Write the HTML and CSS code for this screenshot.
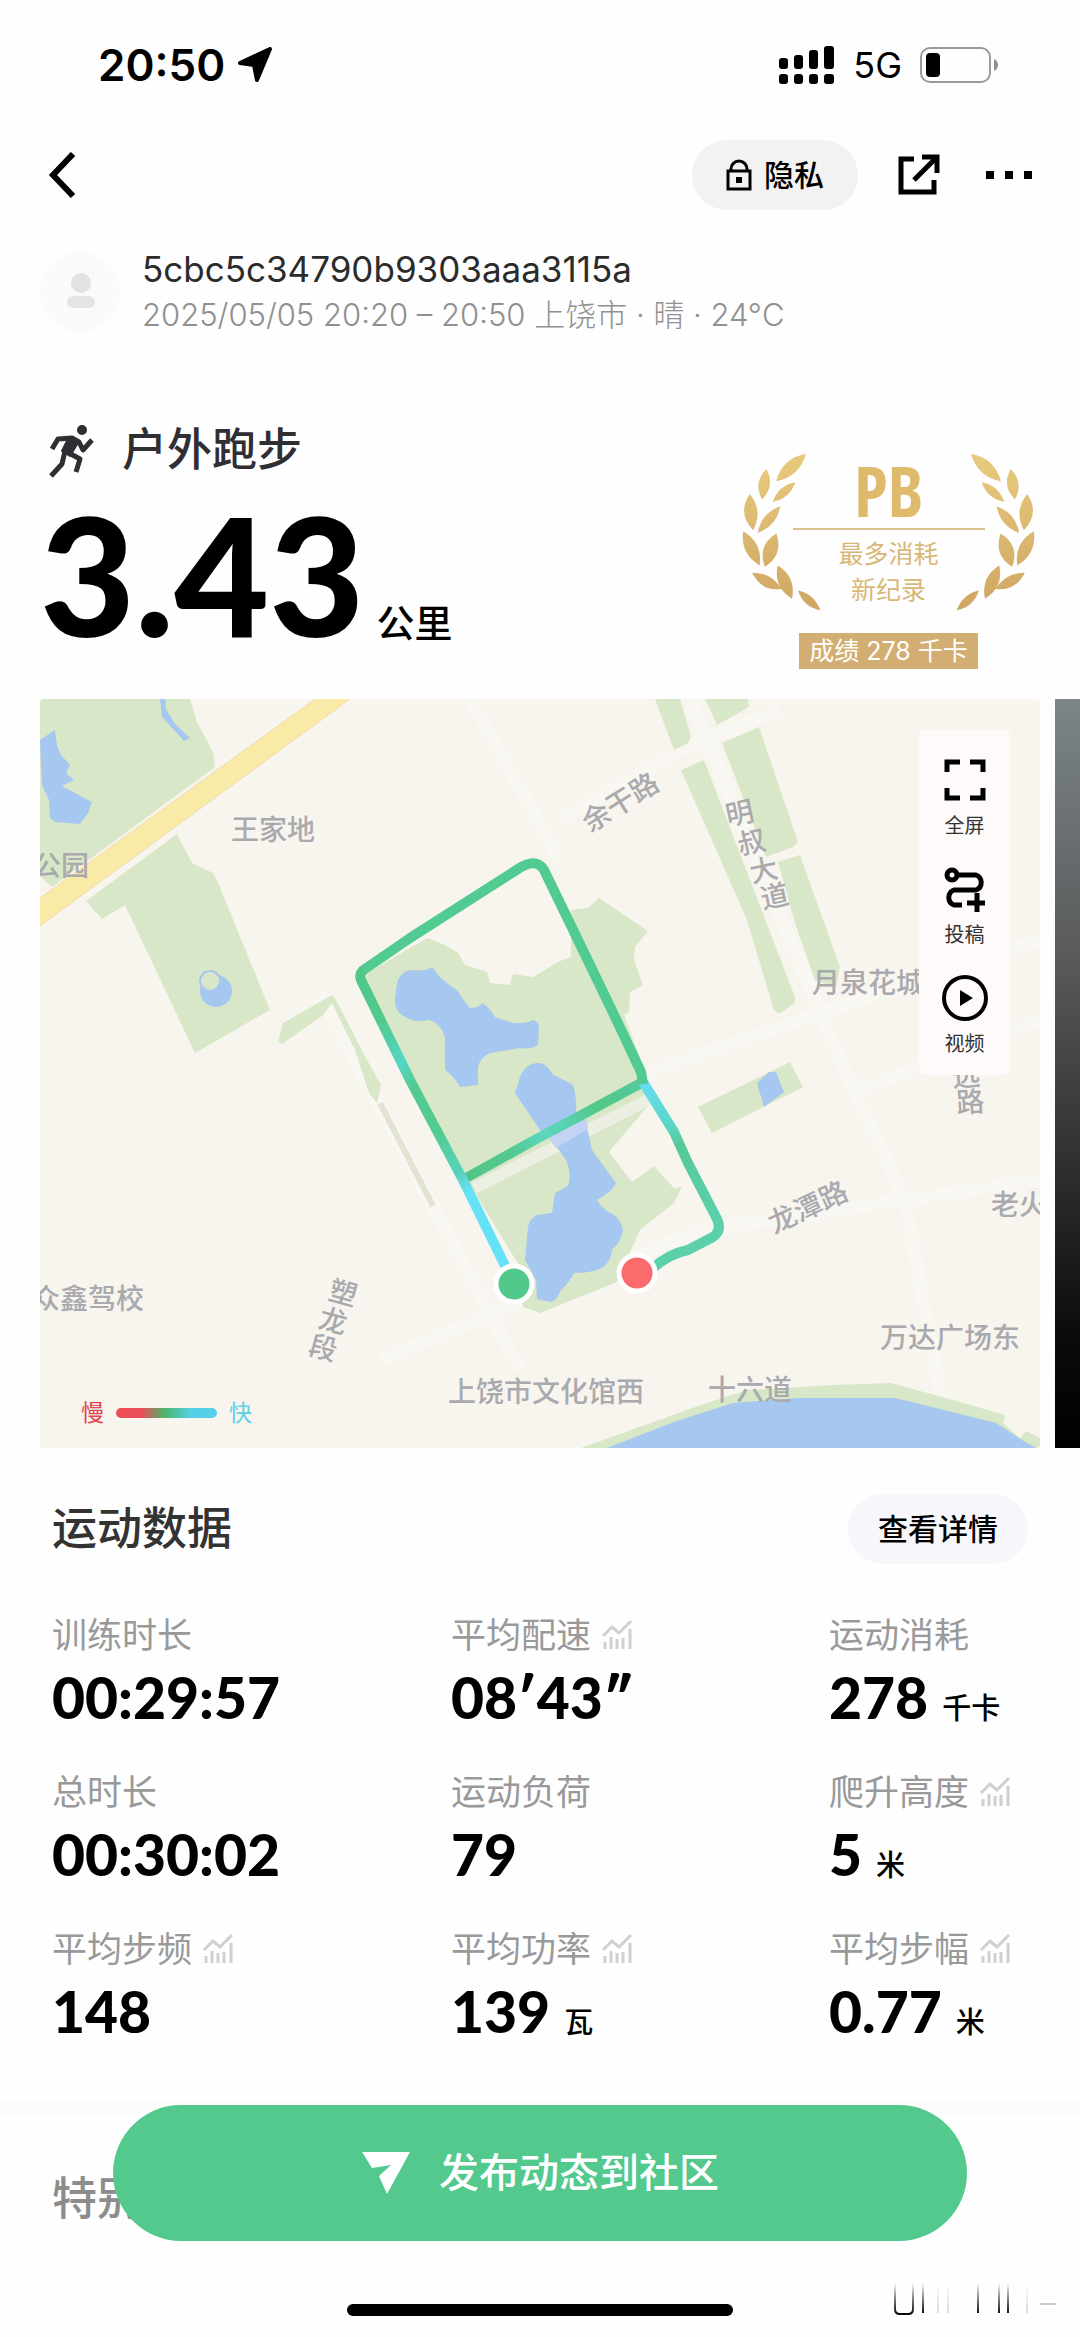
FILE: index.html
```html
<!DOCTYPE html>
<html lang="zh-CN">
<head>
<meta charset="utf-8">
<meta name="viewport" content="width=device-width, initial-scale=1">
<title>户外跑步</title>
<link rel="stylesheet" href="styles.css">
</head>
<body>
<svg class="defs" aria-hidden="true">
  <symbol id="trend" viewBox="0 0 32 32">
    <path d="M2 17 L11 8 L18 14 L30 2" fill="none" stroke="currentColor" stroke-width="3"/>
    <path d="M4 23V30M10 18V30M16 20V30M22 19V30M29 10V30" fill="none" stroke="currentColor" stroke-width="3"/>
  </symbol>
</svg>

<header class="status">
  <div class="status-left">
    <span class="clock">20:50</span>
    <svg width="36" height="36" viewBox="0 0 36 36"><path d="M33 2 L20 33 L17 18 L3 16 Z" stroke="#000" stroke-width="4" stroke-linejoin="round"/></svg>
  </div>
  <div class="status-right">
    <svg width="56" height="40" viewBox="0 0 56 40">
      <rect x="0" y="13" width="9" height="11" rx="3"/><rect x="15" y="10" width="9" height="14" rx="3"/><rect x="30" y="5" width="9" height="19" rx="3"/><rect x="45" y="1" width="10" height="23" rx="3"/>
      <rect x="0" y="29" width="9" height="10" rx="3"/><rect x="15" y="29" width="9" height="10" rx="3"/><rect x="30" y="29" width="9" height="10" rx="3"/><rect x="45" y="29" width="10" height="10" rx="3"/>
    </svg>
    <span class="network">5G</span>
    <svg width="80" height="38" viewBox="0 0 80 38">
      <rect x="1" y="2" width="69" height="34" rx="9" fill="none" stroke="#9a9a9a" stroke-width="2"/>
      <rect x="6" y="7" width="14" height="24" rx="4"/>
      <path d="M74 13 Q78 15 78 19 Q78 23 74 25Z" fill="#8f8f8f"/>
    </svg>
  </div>
</header>

<nav class="nav">
  <button class="icon-button" type="button" aria-label="返回"><svg width="28" height="46" viewBox="0 0 28 46"><path d="M25 2 L5 23 L25 44" fill="none" stroke="#000" stroke-width="6"/></svg></button>
  <div class="nav-actions">
    <button class="pill pill-privacy" type="button">
      <svg width="26" height="32" viewBox="0 0 26 32"><path d="M2 12H24V30H2Z M5 12V10A8 8 0 0 1 21 10V12" fill="none" stroke="#000" stroke-width="3"/><rect x="10" y="18" width="6" height="6"/></svg>
      <span>隐私</span>
    </button>
    <button class="icon-button share" type="button" aria-label="分享"><svg width="42" height="42" viewBox="0 0 42 42"><path d="M16 5H3V38H36V26M24 3H39V19M38 4L16 26" fill="none" stroke="#000" stroke-width="5"/></svg></button>
    <button class="icon-button" type="button" aria-label="更多"><svg width="46" height="8" viewBox="0 0 46 8"><path d="M0 0h8v8h-8zM19 0h8v8h-8zM38 0h8v8h-8z"/></svg></button>
  </div>
</nav>

<main>
  <section class="user">
    <svg class="avatar" width="80" height="80" viewBox="0 0 80 80"><circle cx="40" cy="40" r="40" fill="#fafafa"/><circle cx="41" cy="31" r="10" fill="#e2e2e2"/><rect x="27" y="44" width="28" height="12" rx="6" fill="#e5e5e5"/></svg>
    <div class="user-text">
      <h1 class="user-name">5cbc5c34790b9303aaa3115a</h1>
      <p class="user-meta">2025/05/05 20:20 – 20:50 上饶市 · 晴 · 24°C</p>
    </div>
  </section>

  <section class="summary">
    <div>
      <h2 class="sport">
        <svg width="48" height="56" viewBox="48 420 48 56"><circle cx="82" cy="428" r="5" fill="#2f2f33"/><g fill="none" stroke="#2f2f33" stroke-width="5" stroke-linejoin="round"><path d="M52 447L58 437L72 436L79 440L83 448L92 438"/><path d="M68 437L79 439L70 454L62 449Z" fill="#2f2f33" stroke-width="2"/><path d="M69 451L80 457L76 470"/><path d="M65 449L62 462L51 474"/></g></svg>
        <span>户外跑步</span>
      </h2>
      <p class="distance"><span class="distance-value">3.43</span><span class="distance-unit">公里</span></p>
    </div>
    <div class="record">
      <svg class="laurel" width="293" height="158" viewBox="65 70 880 475" aria-hidden="true">
        <defs>
          <linearGradient id="gold" gradientUnits="userSpaceOnUse" x1="0" y1="70" x2="0" y2="545"><stop offset="0" stop-color="#e8cb7e"/><stop offset="1" stop-color="#cfa562"/></linearGradient>
          <g id="branch"><path d="M257 72Q238 141 167 155Q186 85 257 72M138 118Q165 169 125 210Q97 159 138 118M225 158Q208 207 157 217Q174 167 225 158M88 193Q129 244 98 302Q49 250 88 193M180 230Q169 290 112 310Q123 250 180 230M68 305Q127 339 118 408Q59 373 68 305M168 312Q190 376 133 412Q110 348 168 312M95 430Q152 429 183 478Q126 489 95 430M172 408Q228 443 215 508Q158 473 172 408M233 483Q283 494 300 543Q249 532 233 483"/></g>
        </defs>
        <g fill="url(#gold)"><use href="#branch"/><use href="#branch" transform="translate(1010 0) scale(-1 1)"/></g>
      </svg>
      <strong class="record-mark">PB</strong>
      <p class="record-name">最多消耗<br>新纪录</p>
      <p class="record-score">成绩 278 千卡</p>
    </div>
  </section>

  <section class="carousel">
    <div class="map">
      <svg class="map-canvas" viewBox="40 699 1000 749" preserveAspectRatio="xMidYMid slice">
        <defs>
          <linearGradient id="west" gradientUnits="userSpaceOnUse" x1="361" y1="975" x2="514" y2="1284"><stop offset="0" stop-color="#4fc88a"/><stop offset=".15" stop-color="#52ca8f"/><stop offset=".28" stop-color="#55d6c4"/><stop offset=".36" stop-color="#52cb90"/><stop offset=".5" stop-color="#52cb90"/><stop offset=".64" stop-color="#58d2bb"/><stop offset=".7" stop-color="#66e2f6"/><stop offset="1" stop-color="#66e2f6"/></linearGradient>
          <linearGradient id="cross" gradientUnits="userSpaceOnUse" x1="466" y1="1178" x2="643" y2="1083"><stop offset="0" stop-color="#4fc585"/><stop offset=".25" stop-color="#54c98f"/><stop offset=".45" stop-color="#5cd6bd"/><stop offset=".6" stop-color="#57d0a8"/><stop offset=".75" stop-color="#52c788"/><stop offset="1" stop-color="#56c99c"/></linearGradient>
          <linearGradient id="east" gradientUnits="userSpaceOnUse" x1="643" y1="1083" x2="719" y2="1223"><stop offset="0" stop-color="#66dcf0"/><stop offset=".32" stop-color="#5cd6c4"/><stop offset=".45" stop-color="#56c99a"/><stop offset="1" stop-color="#5bd0ab"/></linearGradient>
        </defs>
        <rect x="40" y="699" width="1000" height="749" fill="#f8f5ef"/>
        <g fill="none" stroke="#f9f7f2" stroke-width="13">
          <path d="M690 699L840 1060L905 1200L950 1448"/><path d="M560 820L680 750L780 710"/><path d="M380 1360L700 1230L1040 1180"/><path d="M640 1075L860 1000L1040 940"/><path d="M320 995L520 1370"/><path d="M470 699L560 860"/><path d="M860 1090L1040 1020"/>
        </g>
        <g fill="#d8e7c7">
          <path d="M40 699H190L197 722L213 752L215 767L52 887L40 876Z"/>
          <path d="M177 834L192 863L213 873L219 885L270 1010L195 1053L125 905L102 919L86 901Z"/>
          <path d="M332 995L336 1000L366 1058L381 1085L377 1103L369 1093L355 1050L332 1003L322 1016L282 1044L278 1042L283 1023Z"/>
          <path d="M367 973L427 938L445 945L458 953L465 965L487 972L490 983L510 985L513 974L533 977L560 961L571 957V910L588 908L599 898L648 931L635 947L634 960L643 985L630 992L629 1012L624 1015L647 1077V1107L609 1152L632 1182L654 1166L674 1188L682 1187L674 1203L640 1230L628 1257L617 1282L540 1313L523 1307L520 1267L467 1180L364 985Z"/>
          <path d="M655 699H680L691 737L688 743L674 750ZM705 699H748L749 707L717 725ZM722 743L759 727L798 842L793 847L766 857ZM778 862L800 855L840 967L836 987L815 980L795 923ZM681 770L704 760L795 997V1003L779 1014L774 1010L747 920ZM790 1062L803 1087L712 1133L698 1107Z"/>
          <path d="M581 1448L695 1407L747 1390L833 1385L891 1383L953 1400L1005 1415L1003 1423L1020 1438L1026 1431L1040 1438V1448Z"/>
        </g>
        <path d="M380 1103L433 1206" stroke="#e2e3d2" stroke-width="6"/>
        <path d="M474 1188L648 1100" stroke="#ecf0e2" stroke-width="12"/>
        <g fill="#a6c7ef" stroke-linejoin="round">
          <path d="M55 730L57 745L61 755L70 765L66 773L74 780L62 786L73 792L92 802L88 813L80 824L55 822L50 818L49 800L42 785L40 740Z"/>
          <path d="M160 699H165L166 709L175 724L190 738L184 741L174 730L162 717Z"/>
          <circle cx="216" cy="991" r="16"/>
          <path d="M397 983Q400 972 410 970Q425 972 432 967Q440 980 457 990Q463 1000 470 1008Q480 1008 482 1003Q490 1008 495 1017L513 1023Q525 1024 533 1020Q539 1022 539 1027L538 1045Q530 1050 520 1048L490 1053Q480 1058 478 1067V1085L460 1087Q454 1076 445 1070V1037Q440 1022 428 1020Q415 1023 407 1018Q394 1012 395 1000Z"/>
          <path d="M515 1093L520 1077Q526 1062 540 1063Q548 1065 553 1075Q565 1080 573 1085Q577 1097 576 1113L586 1123L592 1150L616 1183Q614 1190 597 1200Q603 1210 613 1214Q621 1220 623 1230Q621 1242 612 1250Q611 1263 600 1269Q590 1273 574 1273Q570 1282 561 1290Q556 1302 550 1302L537 1299L536 1280L525 1260L528 1227Q530 1218 537 1215L552 1213L555 1193L568 1186Q572 1175 566 1160L554 1143L540 1130Z"/>
          <path d="M769 1072H776L784 1092L764 1107L757 1083Z"/>
          <path d="M607 1448L674 1422L733 1403L798 1398H895L936 1408L996 1423L1022 1440L1036 1448Z"/>
        </g>
        <path d="M548 1137L586 1117L588 1129L556 1148Z" fill="#c4d3f4"/>
        <circle cx="210" cy="981" r="10" fill="#d8e7c7" stroke="#a6c7ef" stroke-width="2"/>
        <path d="M40 898L315 699H350L40 926Z" fill="#faeaa7"/>
        <path d="M40 898L315 699M350 699L40 926" fill="none" stroke="#efdcb4" stroke-width="1"/>
        <g class="map-label">
          <text x="231" y="840">王家地</text><text x="33" y="876">公园</text>
          <text transform="translate(590 833) rotate(-32)">余干路</text>
          <text transform="translate(728 826) rotate(-12)">明</text><text transform="translate(740 855) rotate(-12)">叔</text><text transform="translate(752 883) rotate(-12)">大</text><text transform="translate(763 909) rotate(-12)">道</text>
          <text x="812" y="993">月泉花城</text>
          <text transform="translate(774 1234) rotate(-25)">龙潭路</text>
          <text x="991" y="1215">老火</text><text x="880" y="1348">万达广场东</text><text x="448" y="1402">上饶市文化馆西</text><text x="708" y="1400">十六道</text><text x="32" y="1309">众鑫驾校</text>
          <text transform="translate(327 1299) rotate(15)">塑</text><text transform="translate(317 1327) rotate(15)">龙</text><text transform="translate(307 1354) rotate(15)">段</text>
          <text transform="translate(953 1087) rotate(-4)">远</text><text transform="translate(957 1113) rotate(-4)">路</text>
        </g>
        <g fill="none" stroke-width="10" stroke-linejoin="round">
          <path d="M466 1178L540 1137L578 1117L643 1082" stroke="url(#cross)"/>
          <path d="M643 1082L674 1132L688 1163L716 1217Q723 1230 713 1237L688 1250Q668 1254 652 1269" stroke="url(#east)"/>
          <path d="M362 971L410 938L518 869Q536 857 544 870L578 940L616 1019L641 1072L643 1084" stroke="#52cb92"/>
          <path d="M364 970Q357 974 363 984L410 1080L463 1180L514 1284" stroke="url(#west)"/>
        </g>
        <circle cx="514" cy="1284" r="18" fill="#50c98a" stroke="#fff" stroke-width="5"/>
        <circle cx="637" cy="1273" r="18" fill="#fb6b6e" stroke="#fff" stroke-width="5"/>
      </svg>
      <div class="legend"><span class="slow">慢</span><span class="legend-bar"></span><span class="fast">快</span></div>
      <div class="tools">
        <button class="tool" type="button"><svg width="46" height="46" viewBox="0 0 46 46"><path d="M5 15V5H18M28 5H41V15M41 31V41H28M18 41H5V31" fill="none" stroke="#000" stroke-width="5"/></svg><span>全屏</span></button>
        <button class="tool" type="button"><svg width="46" height="46" viewBox="0 0 46 46"><g fill="none" stroke="#000" stroke-width="5"><circle cx="10" cy="9" r="5"/><path d="M15 9H34A8 8 0 0 1 34 24H12A8 8 0 0 0 12 39H20M35 27V46M25 37H43"/></g></svg><span>投稿</span></button>
        <button class="tool" type="button"><svg width="46" height="46" viewBox="0 0 46 46"><circle cx="23" cy="23" r="21" fill="none" stroke="#000" stroke-width="4"/><path d="M18 15L31 23L18 31Z"/></svg><span>视频</span></button>
      </div>
    </div>
    <div class="next-slide"></div>
  </section>

  <section class="data">
    <div class="data-head"><h2 class="heading">运动数据</h2><button class="pill pill-detail" type="button">查看详情</button></div>
    <dl class="stats">
      <div><dt>训练时长</dt><dd>00:29:57</dd></div>
      <div><dt>平均配速<svg class="trend"><use href="#trend"/></svg></dt><dd>08′43″</dd></div>
      <div><dt>运动消耗</dt><dd>278<small>千卡</small></dd></div>
      <div><dt>总时长</dt><dd>00:30:02</dd></div>
      <div><dt>运动负荷</dt><dd>79</dd></div>
      <div><dt>爬升高度<svg class="trend"><use href="#trend"/></svg></dt><dd>5<small>米</small></dd></div>
      <div><dt>平均步频<svg class="trend"><use href="#trend"/></svg></dt><dd>148</dd></div>
      <div><dt>平均功率<svg class="trend"><use href="#trend"/></svg></dt><dd>139<small>瓦</small></dd></div>
      <div><dt>平均步幅<svg class="trend"><use href="#trend"/></svg></dt><dd>0.77<small>米</small></dd></div>
    </dl>
  </section>

  <section class="special"><h2 class="heading">特别</h2></section>
</main>

<footer class="dock">
  <button class="publish" type="button">
    <svg width="50" height="44" viewBox="0 0 50 44"><path d="M1 1H49L26 43L18 25L30 14L11 17Z" fill="#fff"/></svg>
    <span>发布动态到社区</span>
  </button>
  <div class="home-row">
    <span class="home-bar"></span>
    <svg class="peek" width="166" height="36" viewBox="0 0 166 36" aria-hidden="true">
      <defs><linearGradient id="fade" gradientUnits="userSpaceOnUse" x1="0" y1="2" x2="0" y2="34"><stop offset="0" stop-color="#000" stop-opacity="0"/><stop offset="1" stop-color="#000"/></linearGradient></defs>
      <path d="M5 2V28Q5 33 10 33H18Q23 33 23 28V2M33 2V32M88 2V32M109 2V32M118 2V32" fill="none" stroke="url(#fade)" stroke-width="2"/>
      <path d="M48 4V32M58 4V32M137 4V32" fill="none" stroke="url(#fade)" stroke-width="2" opacity=".15"/>
      <path d="M150 23H166" stroke="#ccc" stroke-width="2"/>
    </svg>
  </div>
</footer>
</body>
</html>
```
FILE: styles.css
```css
* { box-sizing: border-box; }

body {
  margin: 0;
  min-height: 100vh;
  position: relative;
  background: #fefefe;
  color: #000;
  font-family: Inter, "Noto Sans CJK SC", sans-serif;
}

h1, h2, p, dl, dd { margin: 0; font-weight: 400; }

button {
  border: 0;
  padding: 0;
  background: none;
  color: inherit;
  font: inherit;
  cursor: pointer;
}

svg { display: block; flex: none; }
.defs { position: absolute; width: 0; height: 0; }

.status {
  display: flex;
  justify-content: space-between;
  align-items: center;
  height: 130px;
  padding: 0 80px 0 98px;
}
.status-left, .status-right { display: flex; align-items: center; }
.status-left { gap: 12px; }
.status-right { gap: 18px; }
.clock { font-size: 44px; line-height: 48px; font-weight: 600; }
.network { font-size: 36px; line-height: 40px; }

.nav {
  display: flex;
  justify-content: space-between;
  align-items: center;
  height: 90px;
  padding: 0 48px;
}
.nav-actions { display: flex; align-items: center; }
.icon-button { display: flex; }
.share { margin: 0 46px 0 40px; }

.pill {
  display: flex;
  align-items: center;
  justify-content: center;
  height: 70px;
  padding: 0 30px;
  border-radius: 35px;
  font-size: 30px;
  line-height: 40px;
  font-weight: 500;
}
.pill-privacy { gap: 12px; padding: 0 34px; background: #f2f2f2; }
.pill-detail { background: #f7f6fa; }

.user { display: flex; align-items: center; gap: 22px; height: 80px; margin: 32px 40px 0; }
.user-text { display: flex; flex-direction: column; gap: 6px; }
.user-name { font-size: 35px; line-height: 40px; font-weight: 400; color: #2b2b2b; }
.user-meta { font-size: 31px; line-height: 40px; font-weight: 300; color: #909090; }

.summary {
  display: flex;
  justify-content: space-between;
  align-items: flex-start;
  padding: 88px 45px 30px 40px;
}
.sport { display: flex; align-items: center; gap: 26px; padding-left: 8px; font-size: 45px; line-height: 60px; font-weight: 500; color: #2f2f33; }
.distance { display: flex; align-items: baseline; gap: 12px; margin-top: 12px; height: 177px; }
.distance-value { font-family: Lato, sans-serif; font-size: 164px; line-height: 164px; font-weight: 900; }
.distance-unit { font-size: 38px; line-height: 48px; font-weight: 500; }

.record {
  position: relative;
  display: flex;
  flex-direction: column;
  align-items: center;
  width: 293px;
  margin-top: 33px;
}
.laurel { position: absolute; top: 0; left: 0; }
.record-mark {
  width: 192px;
  border-bottom: 2px solid #d8c48b;
  font-family: "Liberation Sans Narrow", "Open Sans Condensed", Inter, sans-serif;
  font-size: 70px;
  line-height: 75px;
  text-align: center;
  color: #e0ba6c;
}
.record-name { margin-top: 6px; font-size: 25px; line-height: 36px; text-align: center; color: #d9b877; }
.record-score { margin-top: 25px; padding: 0 10px; background: #d3ae72; color: #fff; font-size: 25px; line-height: 36px; }

.carousel { display: flex; gap: 15px; padding-left: 40px; }
.map { position: relative; flex: 1; min-width: 0; overflow: hidden; border-radius: 4px; }
.map-canvas { width: 100%; height: auto; }
.map-label { font-size: 28px; font-weight: 500; fill: #a9a9ae; }
.next-slide { width: 25px; background: linear-gradient(#7c8587, #58595a 35%, #2b2b2c 65%, #0b0b0b 85%, #000); }

.legend { position: absolute; left: 41px; bottom: 19px; display: flex; align-items: center; gap: 12px; font-size: 23px; line-height: 32px; }
.legend-bar { width: 101px; height: 10px; border-radius: 5px; background: linear-gradient(90deg, #ec4c57 25%, #4cb56c 48%, #55d0e8 75%); }
.slow { color: #df4450; }
.fast { color: #5bd0e6; }

.tools {
  position: absolute;
  top: 31px;
  right: 30px;
  display: flex;
  flex-direction: column;
  gap: 29px;
  width: 91px;
  padding: 27px 0 20px;
  border-radius: 6px;
  background: #fefaf9;
}
.tool { display: flex; flex-direction: column; align-items: center; gap: 12px; font-size: 20px; line-height: 22px; color: #333; }

.data { padding: 46px 52px 0; }
.data-head { display: flex; justify-content: space-between; align-items: center; }
.heading { font-size: 45px; line-height: 60px; font-weight: 500; color: #333; }
.stats {
  display: grid;
  grid-template-columns: 399fr 378fr 199fr;
  row-gap: 43px;
  margin-top: 49px;
}
.stats dt { display: flex; align-items: center; gap: 10px; font-size: 35px; line-height: 44px; color: #999; }
.stats dd { display: flex; align-items: baseline; gap: 14px; height: 60px; margin-top: 10px; font-family: Lato, "Noto Sans CJK SC", sans-serif; font-size: 57px; line-height: 60px; font-weight: 900; white-space: nowrap; }
.stats small { font-family: "Noto Sans CJK SC", sans-serif; font-size: 29px; line-height: 30px; font-weight: 500; }
.trend { width: 32px; height: 32px; color: #d0d0d0; }

.special { margin-top: 58px; padding: 54px 52px 0; border-top: 16px solid #fcfcfc; }
.special .heading { color: #8c8c8c; }

/* Publish bar floats above the page content. */
.dock { position: fixed; left: 0; right: 0; bottom: 0; padding: 0 113px; }
.publish {
  display: flex;
  align-items: center;
  justify-content: center;
  gap: 28px;
  width: 100%;
  height: 136px;
  border-radius: 68px;
  background: #53c98d;
  color: #fff;
  font-size: 40px;
  line-height: 48px;
  font-weight: 500;
}
.home-row { position: relative; display: flex; justify-content: center; height: 96px; padding-top: 63px; }
.home-bar { width: 386px; height: 12px; border-radius: 6px; background: #000; }
.peek { position: absolute; right: -89px; top: 40px; }
```
